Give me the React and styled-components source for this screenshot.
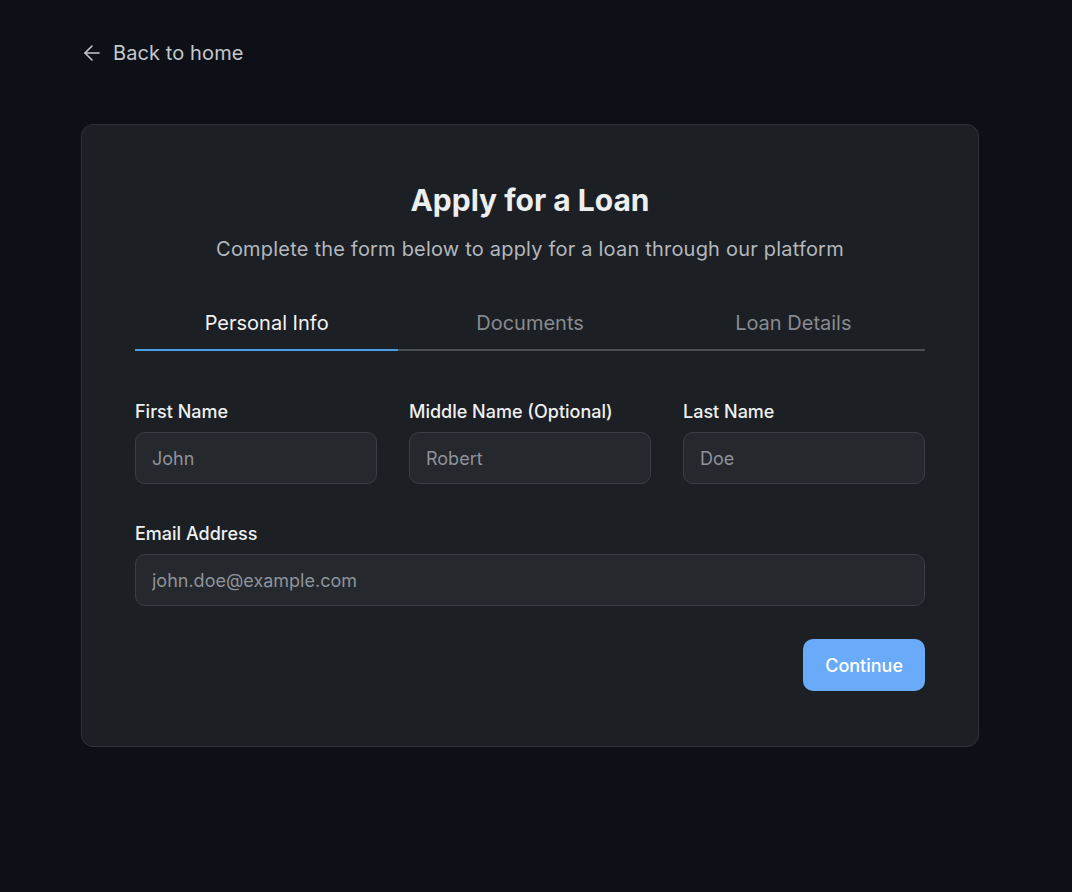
import React, { useState } from 'react'
import styled, { createGlobalStyle } from 'styled-components'

const GlobalStyle = createGlobalStyle`
  html, body {
    margin: 0;
    padding: 0;
    background: #0d1117;
    font-family: Inter, 'Noto Sans', sans-serif;
  }
  * { box-sizing: border-box; }
`

const Page = styled.div`
  min-height: 892px;
  background: #0d1117;
  padding: 39px 0 0 81px;
`

const Wrapper = styled.div`
  width: 898px;
`

const BackLink = styled.a`
  display: flex;
  width: max-content;
  align-items: center;
  gap: 9px;
  margin-left: -1px;
  color: #c4c8cd;
  font-size: 20px;
  line-height: 28px;
  letter-spacing: 0.1px;
  text-decoration: none;
  cursor: pointer;
  svg { display: block; }
`

const Card = styled.div`
  margin-top: 57px;
  background: #1c1f23;
  border: 1px solid #2f3237;
  border-radius: 12px;
  padding: 57px 53px 55px;
`

const Title = styled.h1`
  margin: 0;
  text-align: center;
  color: #eceef0;
  font-size: 30px;
  line-height: 36px;
  font-weight: 700;
`

const Subtitle = styled.p`
  margin: 17px 0 0;
  text-align: center;
  color: #b3b8be;
  font-size: 20px;
  line-height: 28px;
  letter-spacing: 0.2px;
`

const Tabs = styled.div`
  display: grid;
  grid-template-columns: repeat(3, 1fr);
  margin-top: 34px;
  border-bottom: 2px solid #4a4d52;
`

const Tab = styled.button`
  background: none;
  border: none;
  margin-bottom: -2px;
  padding: 12px 0;
  font-family: inherit;
  font-size: 20px;
  line-height: 28px;
  color: ${p => (p.$active ? '#f2f3f5' : '#878b91')};
  border-bottom: 2px solid ${p => (p.$active ? '#4a9ee6' : 'transparent')};
  cursor: pointer;
`

const Row = styled.div`
  display: grid;
  grid-template-columns: repeat(${p => p.$cols}, 1fr);
  gap: 32px;
  margin-top: ${p => p.$top}px;
`

const Field = styled.div`
  display: flex;
  flex-direction: column;
  gap: 8px;
`

const Label = styled.label`
  color: #eef0f2;
  font-size: 18px;
  line-height: 24px;
  font-weight: 500;
`

const Input = styled.input`
  height: 52px;
  width: 100%;
  background: #25282d;
  border: 1px solid #3b3e44;
  border-radius: 10px;
  padding: 0 16px;
  font-family: inherit;
  font-size: 18px;
  color: #e6e8ea;
  outline: none;
  &::placeholder { color: #8e939b; }
`

const Footer = styled.div`
  display: flex;
  justify-content: flex-end;
  margin-top: 33px;
`

const Button = styled.button`
  height: 52px;
  padding: 0 22px;
  background: #6aabf9;
  color: #ffffff;
  border: none;
  border-radius: 10px;
  font-family: inherit;
  font-size: 18px;
  font-weight: 500;
  cursor: pointer;
`

const tabs = ['Personal Info', 'Documents', 'Loan Details']

export default function App() {
  const [active, setActive] = useState(0)
  return (
    <>
      <GlobalStyle />
      <Page>
        <Wrapper>
          <BackLink>
            <svg width="24" height="24" viewBox="0 0 24 24" fill="none" stroke="currentColor" strokeWidth="1.6" strokeLinecap="round" strokeLinejoin="round">
              <path d="M19 12H5" />
              <path d="M12 19l-7-7 7-7" />
            </svg>
            Back to home
          </BackLink>
          <Card>
            <Title>Apply for a Loan</Title>
            <Subtitle>Complete the form below to apply for a loan through our platform</Subtitle>
            <Tabs>
              {tabs.map((t, i) => (
                <Tab key={t} $active={i === active} onClick={() => setActive(i)}>{t}</Tab>
              ))}
            </Tabs>
            <Row $cols={3} $top={49}>
              <Field>
                <Label>First Name</Label>
                <Input placeholder="John" />
              </Field>
              <Field>
                <Label>Middle Name (Optional)</Label>
                <Input placeholder="Robert" />
              </Field>
              <Field>
                <Label>Last Name</Label>
                <Input placeholder="Doe" />
              </Field>
            </Row>
            <Row $cols={1} $top={38}>
              <Field>
                <Label>Email Address</Label>
                <Input placeholder="john.doe@example.com" />
              </Field>
            </Row>
            <Footer>
              <Button>Continue</Button>
            </Footer>
          </Card>
        </Wrapper>
      </Page>
    </>
  )
}
